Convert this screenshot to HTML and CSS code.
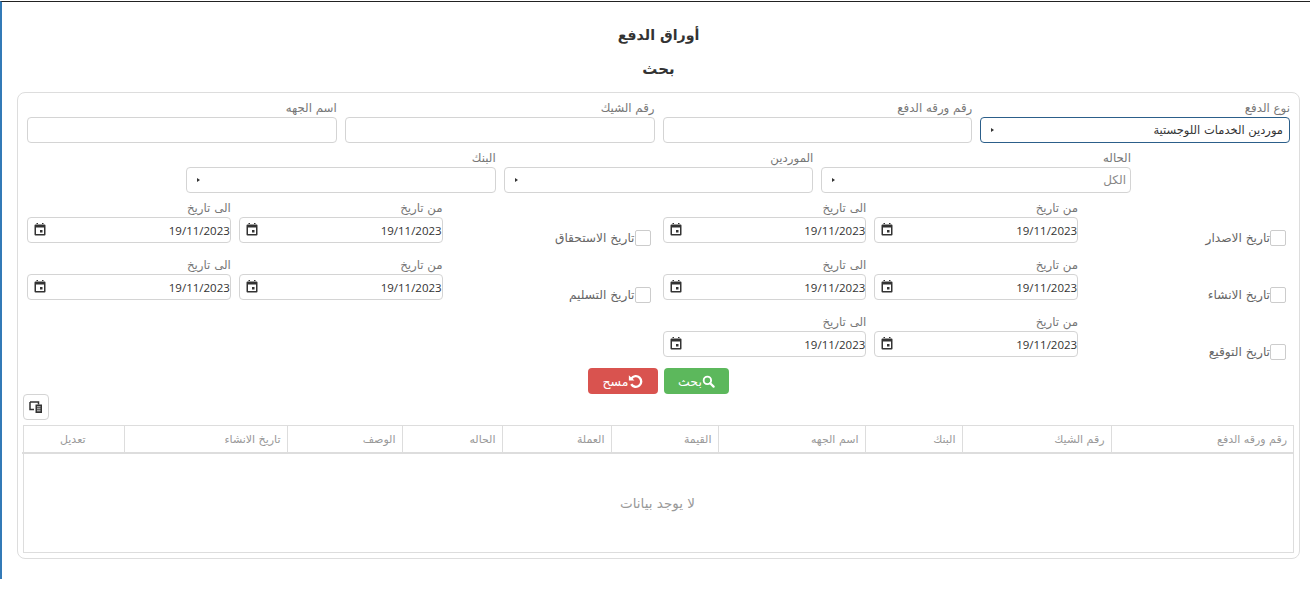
FILE: index.html
```html
<!DOCTYPE html>
<html lang="ar" dir="rtl">
<head>
<meta charset="utf-8">
<title>أوراق الدفع</title>
<link rel="stylesheet" href="styles.css">
</head>
<body>
<svg class="defs" aria-hidden="true"><symbol id="cal" viewBox="0 0 12 13"><path d="M1.500 1.500h9a1 1 0 0 1 1 1v9a1 1 0 0 1-1 1h-9a1 1 0 0 1-1-1v-9a1 1 0 0 1 1-1zM2 4.500v6.500h8V4.500zM2.500 0H4v2H2.500zM8 0h1.500v2H8zM6 7h2.500v2.500H6z" fill-rule="evenodd"/></symbol></svg>
<main class="page">
  <h2 class="title">أوراق الدفع</h2>
  <h2 class="subtitle">بحث</h2>
  <section class="card">
    <div class="grid4">
      <div class="field"><label>نوع الدفع</label>
        <div class="control select focus"><span class="val">موردين الخدمات اللوجستية</span><i class="caret"></i></div></div>
      <div class="field"><label>رقم ورقه الدفع</label><div class="control"></div></div>
      <div class="field"><label>رقم الشيك</label><div class="control"></div></div>
      <div class="field"><label>اسم الجهه</label><div class="control"></div></div>
    </div>
    <div class="grid3">
      <div class="field"><label>الحاله</label>
        <div class="control select"><span class="ph">الكل</span><i class="caret"></i></div></div>
      <div class="field"><label>الموردين</label>
        <div class="control select"><span></span><i class="caret"></i></div></div>
      <div class="field"><label>البنك</label>
        <div class="control select"><span></span><i class="caret"></i></div></div>
    </div>

    <div class="grid6">
      <div class="check"><span class="box"></span><span>تاريخ الاصدار</span></div>
      <div class="field"><label>من تاريخ</label><div class="control date"><span>19/11/2023</span><svg class="cal"><use href="#cal"/></svg></div></div>
      <div class="field"><label>الى تاريخ</label><div class="control date"><span>19/11/2023</span><svg class="cal"><use href="#cal"/></svg></div></div>
      <div class="check"><span class="box"></span><span>تاريخ الاستحقاق</span></div>
      <div class="field"><label>من تاريخ</label><div class="control date"><span>19/11/2023</span><svg class="cal"><use href="#cal"/></svg></div></div>
      <div class="field"><label>الى تاريخ</label><div class="control date"><span>19/11/2023</span><svg class="cal"><use href="#cal"/></svg></div></div>

      <div class="check"><span class="box"></span><span>تاريخ الانشاء</span></div>
      <div class="field"><label>من تاريخ</label><div class="control date"><span>19/11/2023</span><svg class="cal"><use href="#cal"/></svg></div></div>
      <div class="field"><label>الى تاريخ</label><div class="control date"><span>19/11/2023</span><svg class="cal"><use href="#cal"/></svg></div></div>
      <div class="check"><span class="box"></span><span>تاريخ التسليم</span></div>
      <div class="field"><label>من تاريخ</label><div class="control date"><span>19/11/2023</span><svg class="cal"><use href="#cal"/></svg></div></div>
      <div class="field"><label>الى تاريخ</label><div class="control date"><span>19/11/2023</span><svg class="cal"><use href="#cal"/></svg></div></div>

      <div class="check"><span class="box"></span><span>تاريخ التوقيع</span></div>
      <div class="field"><label>من تاريخ</label><div class="control date"><span>19/11/2023</span><svg class="cal"><use href="#cal"/></svg></div></div>
      <div class="field"><label>الى تاريخ</label><div class="control date"><span>19/11/2023</span><svg class="cal"><use href="#cal"/></svg></div></div>
    </div>

    <div class="actions">
      <button class="btn green"><svg class="ico" viewBox="0 0 14 14"><circle cx="5.800" cy="5.800" r="4" fill="none" stroke="#fff" stroke-width="2"/><path d="M8.800 8.800l3.700 3.700" stroke="#fff" stroke-width="2.400" stroke-linecap="round"/></svg><span>بحث</span></button>
      <button class="btn red"><svg class="ico ico-lg" viewBox="0 0 14 14"><path d="M3.200 4.200A5 5 0 1 1 3 9.500" fill="none" stroke="#fff" stroke-width="2.200"/><path d="M.8 1.200L6 6H.8z" fill="#fff"/></svg><span>مسح</span></button>
    </div>

    <div class="tools">
      <button class="tool"><svg viewBox="0 0 14 14"><path d="M1 2h8.500v2.500M5 9.500H1V2" fill="none" stroke="#333" stroke-width="1.500"/><path d="M6.500 4.500H13v8.500H6.500z" fill="#333"/><path d="M8 6.800h3.500M8 8.800h3.500M8 10.800h3.500" stroke="#fff" stroke-width=".8"/></svg></button>
    </div>

    <div class="table-wrap">
      <table class="tbl">
        <colgroup>
          <col class="c1"><col class="c2"><col class="c3"><col class="c4"><col class="c5"><col class="c6"><col class="c7"><col class="c8"><col class="c9"><col class="c10">
        </colgroup>
        <thead>
          <tr><th>رقم ورقه الدفع</th><th>رقم الشيك</th><th>البنك</th><th>اسم الجهه</th><th>القيمة</th><th>العملة</th><th>الحاله</th><th>الوصف</th><th>تاريخ الانشاء</th><th class="mid">تعديل</th></tr>
        </thead>
        <tbody>
          <tr><td colspan="10" class="empty">لا يوجد بيانات</td></tr>
        </tbody>
      </table>
    </div>
  </section>
</main>
</body>
</html>
```
FILE: styles.css
```css
* { box-sizing: border-box; }
html, body { margin: 0; padding: 0; background: #fff; }
body {
  height: 592px;
  overflow: hidden;
  padding-top: 1px;
  font-family: "DejaVu Sans", "Noto Sans", sans-serif;
  font-size: 11px;
  color: #555;
}
.defs { display: none; }
.page {
  height: 578px;
  border-top: 1px solid #222;
  border-left: 2px solid #337ab7;
  padding: 0 10px 0 15px;
}
.title, .subtitle {
  margin: 0;
  text-align: center;
  font-weight: 700;
  color: #333;
  line-height: 20px;
}
.title { padding-top: 23px; font-size: 14.2px; }
.subtitle { padding-top: 14px; margin-bottom: 13px; font-size: 15px; }
.card {
  height: 467px;
  border: 1px solid #ddd;
  border-radius: 8px;
  padding: 8px 5px 4px;
}
.grid4 {
  display: grid;
  grid-template-columns: repeat(4, 1fr);
  gap: 8px;
  padding: 0 4px;
}
.grid3 {
  display: grid;
  grid-template-columns: repeat(3, 1fr);
  gap: 8px;
  padding: 0 163px;
  margin-top: 8px;
}
.grid6 {
  display: grid;
  grid-template-columns: repeat(6, 1fr);
  column-gap: 8px;
  row-gap: 15px;
  padding: 0 4px;
  margin-top: 8px;
}
.field label {
  display: block;
  height: 16px;
  line-height: 14px;
  font-size: 11.800px;
  color: #777;
}
.control {
  height: 26px;
  border: 1px solid #d4d4d4;
  border-radius: 4px;
  background: #fff;
}
.select, .date {
  display: flex;
  align-items: center;
  justify-content: space-between;
}
.select { padding: 0 4px 0 10px; }
.focus { border-color: #2c5f8a; }
.val { color: #333; font-size: 11.500px; padding-right: 2px; }
.ph { color: #888; font-size: 12px; }
.caret {
  width: 0;
  height: 0;
  border-top: 2.500px solid transparent;
  border-bottom: 2.500px solid transparent;
  border-left: 3px solid #333;
}
.date { padding: 0 0 0 6px; font-family: "Open Sans", sans-serif; font-size: 11.500px; color: #333; }
.cal { width: 12px; height: 13px; fill: #333; margin-bottom: 2px; }
.check {
  display: flex;
  align-items: center;
  height: 42px;
  padding: 31px 4px 0 0;
  font-size: 12.200px;
  color: #666;
}
.box {
  width: 16px;
  height: 16px;
  border: 1px solid #ccc;
  border-radius: 2px;
  flex: none;
}
.actions {
  display: flex;
  justify-content: center;
  gap: 6px;
  margin-top: 11px;
}
.btn {
  display: flex;
  align-items: center;
  justify-content: center;
  height: 26px;
  border: 0;
  border-radius: 4px;
  color: #fff;
  font: inherit;
  font-size: 12.500px;
  padding: 0;
}
.ico { width: 13px; height: 13px; }
.ico-lg { width: 15px; height: 15px; }
.green { width: 65px; background: #5cb85c; }
.red { width: 70px; background: #d9534f; }
.tools { display: flex; justify-content: flex-end; }
.tool {
  width: 26px;
  height: 26px;
  border: 1px solid #d4d4d4;
  border-radius: 4px;
  background: #fff;
  padding: 5px 5px;
  display: flex;
}
.tool svg { width: 14px; height: 14px; }
.table-wrap { margin-top: 5px; border: 1px solid #ddd; height: 128px; }
.tbl { width: 100%; table-layout: fixed; border-collapse: collapse; }
.tbl th {
  height: 27px;
  border-left: 1px solid #ddd;
  border-bottom: 2px solid #ddd;
  font-weight: 400;
  font-size: 11px;
  color: #999;
  text-align: right;
  padding: 0 6px;
}
.tbl th:last-child { border-left: 0; }
.tbl th.mid { text-align: center; }
.c1 { width: 182px; } .c2 { width: 149px; } .c3 { width: 97px; } .c4 { width: 147px; }
.c5 { width: 107px; } .c6 { width: 109px; } .c7 { width: 100px; } .c8 { width: 115px; }
.c9 { width: 163px; } .c10 { width: 102px; }
.empty { height: 99px; text-align: center; font-size: 13.500px; color: #999; }
```
